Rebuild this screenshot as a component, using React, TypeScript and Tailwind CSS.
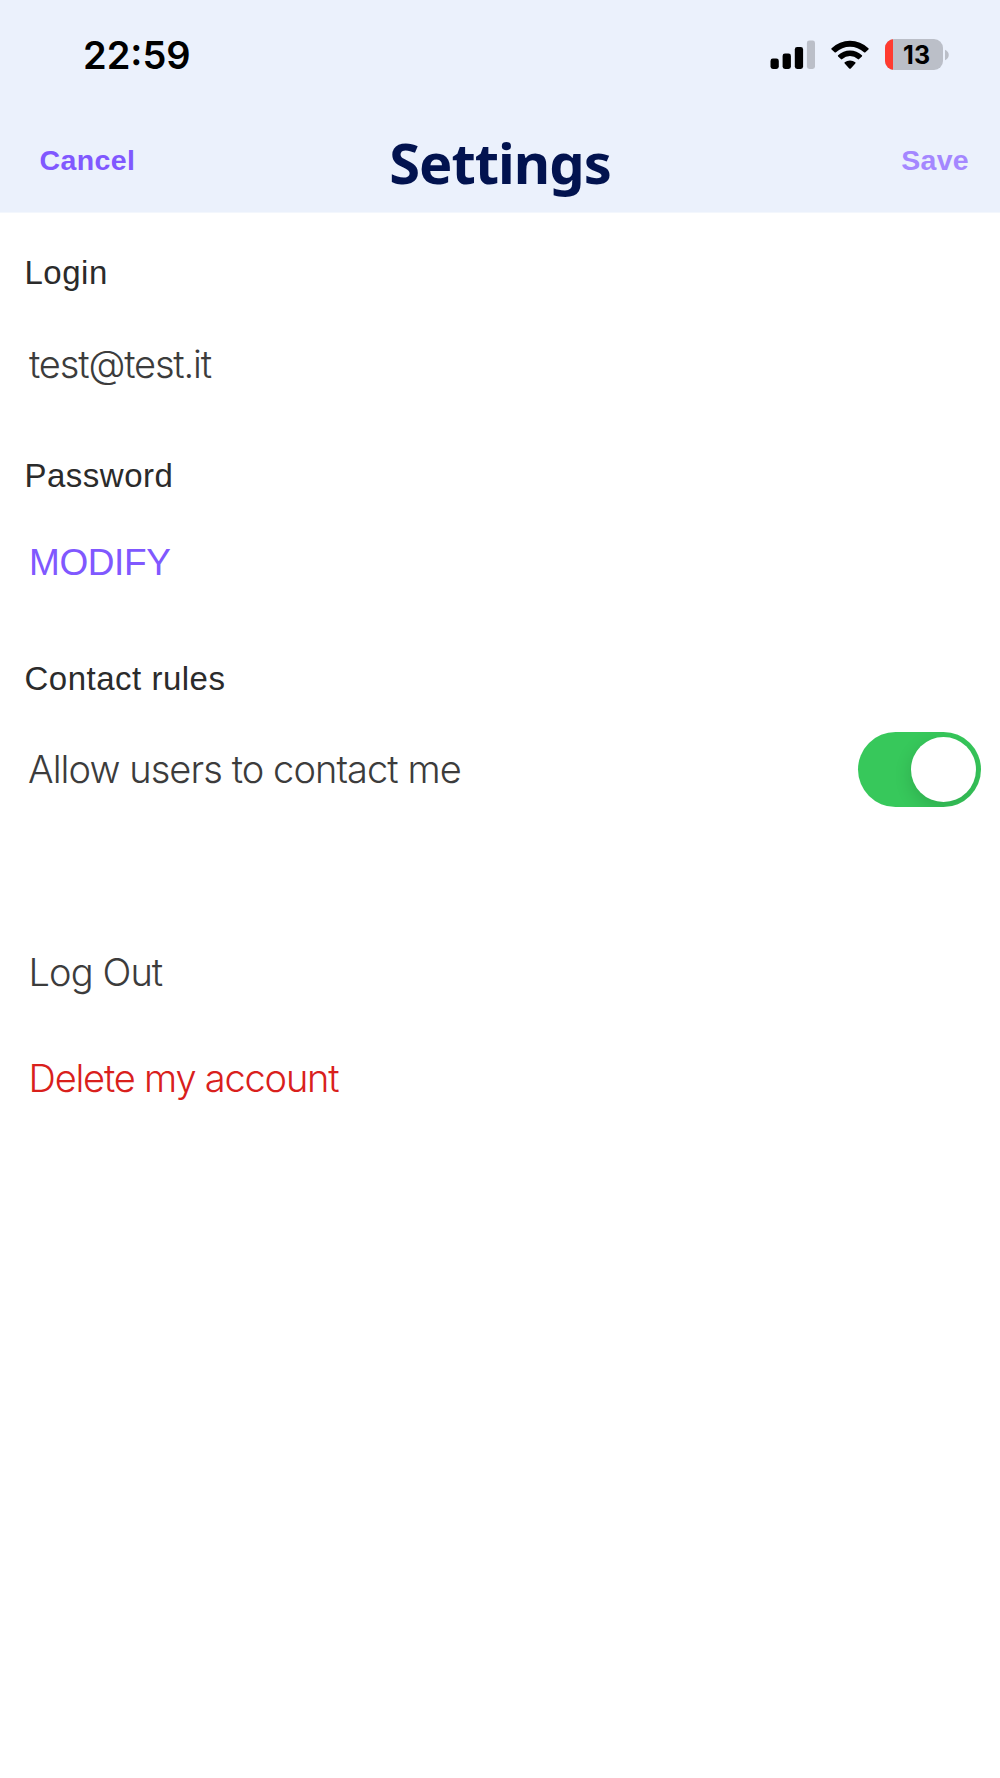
import { useState } from 'react'

// ─── Status bar ───────────────────────────────────────────

function SignalIcon() {
  return (
    <svg width="45" height="30" viewBox="0 0 45 30">
      <rect x="0.5" y="18.5" width="8.3" height="10.5" rx="2.4" fill="#000" />
      <rect x="12.6" y="13.5" width="8.3" height="15.5" rx="2.4" fill="#000" />
      <rect x="24.8" y="7" width="8.3" height="22" rx="2.4" fill="#000" />
      <rect x="36.9" y="0.5" width="8.1" height="28.5" rx="2.4" fill="#bbbfc8" />
    </svg>
  )
}

function WifiIcon() {
  return (
    <svg width="38" height="30" viewBox="0 0 38 30">
      <path d="M0.6 8.2 Q0 8.9 0.6 9.5 L3.6 12.3 Q4.3 12.9 5 12.3 A20.4 20.4 0 0 1 33 12.3 Q33.7 12.9 34.4 12.3 L37.4 9.5 Q38 8.9 37.4 8.2 A26.7 26.7 0 0 0 0.6 8.2Z" />
      <path d="M7.1 15.3 Q6.5 15.9 7.1 16.5 L9.9 19.1 Q10.6 19.7 11.3 19.1 A11.4 11.4 0 0 1 26.7 19.1 Q27.4 19.7 28.1 19.1 L30.9 16.5 Q31.5 15.9 30.9 15.3 A17.4 17.4 0 0 0 7.1 15.3Z" />
      <path d="M13.7 22.3 Q13.1 22.9 13.7 23.5 L18.2 28.4 Q19 29.2 19.8 28.4 L24.3 23.5 Q24.9 22.9 24.3 22.3 A8.3 8.3 0 0 0 13.7 22.3Z" />
    </svg>
  )
}

function Battery({ level }: { level: number }) {
  return (
    <div className="flex items-center">
      <div className="flex h-[31px] w-[58px] overflow-hidden rounded-[9px] bg-[#bbbfc8]">
        <div className="bg-[#ff3b30]" style={{ width: `${level}%` }} />
        <span className="grow pr-[2px] text-center font-['Inter',sans-serif] text-[25px] leading-[33px] font-bold tracking-[0.4px] text-black">
          {level}
        </span>
      </div>
      <svg className="ml-[2px]" width="4" height="12" viewBox="0 0 4 12">
        <path d="M0 0.8C5 2.6 5 9.4 0 11.2Z" fill="#bbbfc8" />
      </svg>
    </div>
  )
}

function StatusBar() {
  return (
    <div className="flex h-[110px] justify-between pr-[51px] pl-[83px]">
      <span className="mt-[35px] h-[40px] font-['Inter',sans-serif] text-[38px] leading-[40px] font-semibold text-black">
        22:59
      </span>
      <div className="mt-[39px] flex h-[31px] items-center">
        <SignalIcon />
        <div className="ml-[16px]">
          <WifiIcon />
        </div>
        <div className="ml-[16px]">
          <Battery level={13} />
        </div>
      </div>
    </div>
  )
}

// ─── Header ───────────────────────────────────────────────

function Header() {
  return (
    <header className="h-[213px] border-b border-[#f3f7fd] bg-[#ebf1fc]">
      <StatusBar />
      <div className="grid h-[102px] grid-cols-3 items-start font-['Liberation_Sans',sans-serif]">
        <button className="mt-[30px] pl-[39.5px] text-left text-[28.5px] leading-[40px] font-bold tracking-[0.4px] text-[#8058ff]">
          Cancel
        </button>
        <h1 className="mt-[22px] text-center font-['Noto_Sans',sans-serif] text-[56px] leading-[60px] font-bold tracking-[-1px] text-[#02134f]">
          Settings
        </h1>
        <button className="mt-[30px] pr-[31px] text-right text-[28.5px] leading-[40px] font-bold tracking-[0.3px] text-[#a487ff]">
          Save
        </button>
      </div>
    </header>
  )
}

// ─── Form pieces ──────────────────────────────────────────

function Label({ children }: { children: string }) {
  return (
    <h2 className="h-[60px] pl-[24.5px] font-['Liberation_Sans',sans-serif] text-[33px] leading-[60px] tracking-[0.5px] text-[#2b2b2b]">
      {children}
    </h2>
  )
}

function Switch() {
  const [on, setOn] = useState(true)

  return (
    <button
      role="switch"
      aria-checked={on}
      aria-label="Allow users to contact me"
      onClick={() => setOn(!on)}
      className={`flex h-[75px] w-[123px] items-center overflow-hidden rounded-full px-[4.5px] ${
        on ? 'justify-end bg-[#37c85b]' : 'justify-start bg-[#e9e9eb]'
      }`}
    >
      <span className="size-[65.5px] rounded-full bg-white shadow-[0_6px_18px_rgba(0,0,0,0.14)]" />
    </button>
  )
}

export default function App() {
  return (
    <div className="min-h-[1778px] w-[1000px] bg-white">
      <Header />
      <main className="flex flex-col items-stretch pt-[30px] font-['Inter',sans-serif] text-[38px] leading-[60px] font-light text-[#3c3c3c]">
        <Label>Login</Label>
        <p className="mt-[31px] pl-[29px] tracking-[-1.15px]">test@test.it</p>

        <div className="mt-[52px]">
          <Label>Password</Label>
        </div>
        <button className="mt-[27px] self-start pl-[29px] font-['Liberation_Sans',sans-serif] text-[37px] leading-[60px] font-normal tracking-[-0.4px] text-[#8058ff]">
          MODIFY
        </button>

        <div className="mt-[56px]">
          <Label>Contact rules</Label>
        </div>
        <div className="mt-[23px] flex h-[75px] items-center justify-between pr-[19.5px] pl-[28px]">
          <span className="mb-[2px] tracking-[-0.93px]">Allow users to contact me</span>
          <Switch />
        </div>

        <button className="mt-[135px] self-start pl-[28.5px] tracking-[-0.9px]">Log Out</button>
        <button className="mt-[46px] self-start pl-[28.5px] tracking-[-1.2px] text-[#d9201c]">
          Delete my account
        </button>
      </main>
    </div>
  )
}
